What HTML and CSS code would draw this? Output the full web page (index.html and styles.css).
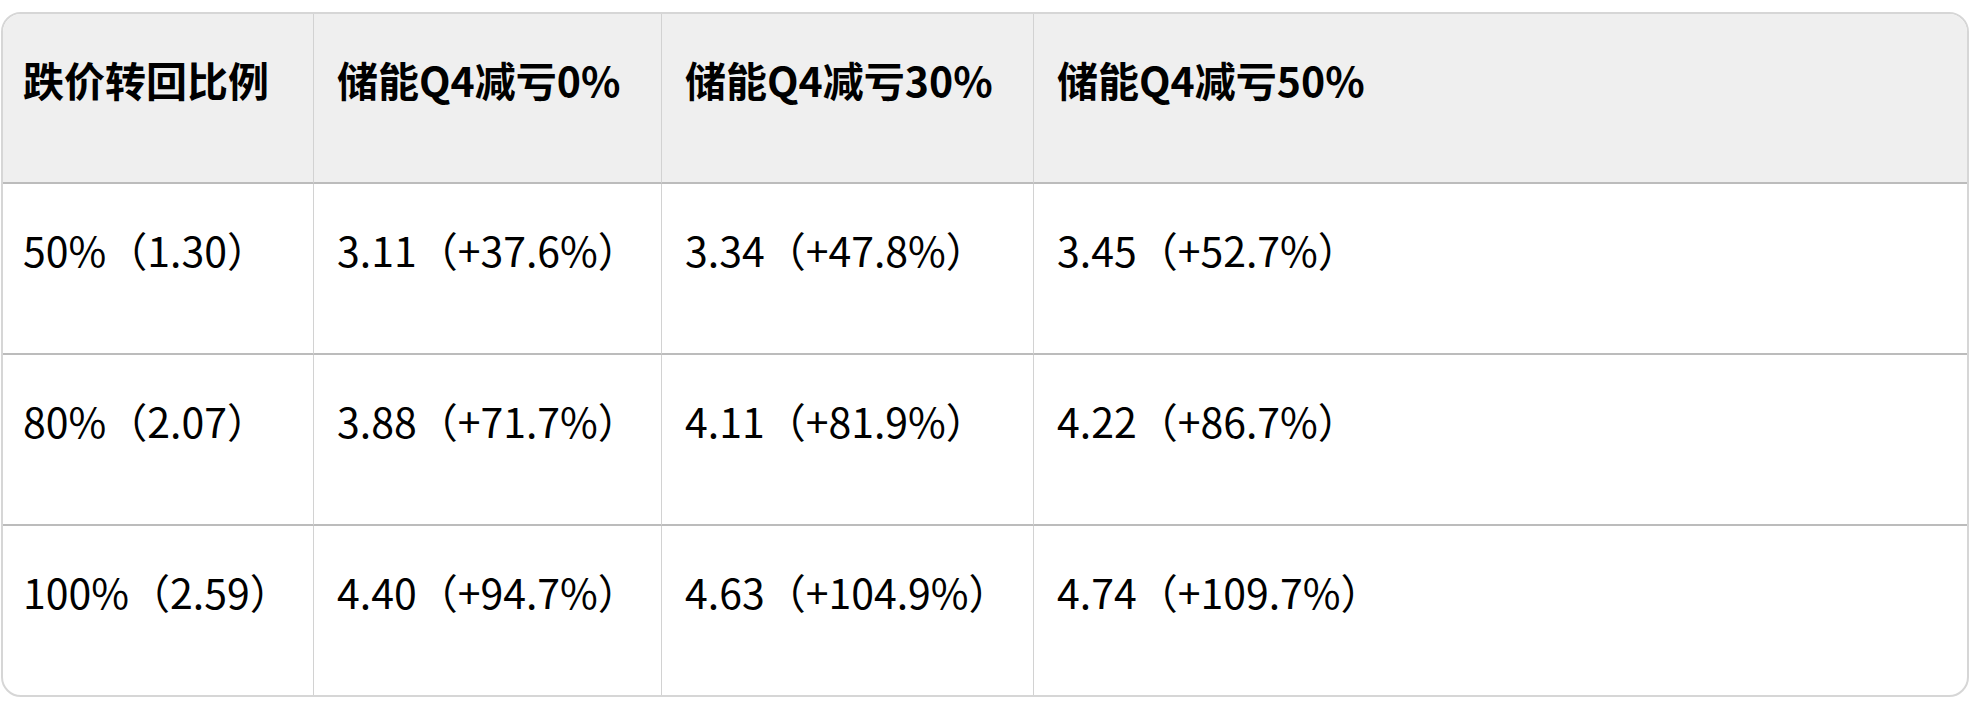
FILE: index.html
```html
<!DOCTYPE html>
<html lang="zh-CN">
<head>
<meta charset="utf-8">
<title>跌价转回比例</title>
<link rel="stylesheet" href="styles.css">
</head>
<body>
<div class="table">
  <div class="cell head first">跌价转回比例</div>
  <div class="cell head">储能Q4减亏0%</div>
  <div class="cell head">储能Q4减亏30%</div>
  <div class="cell head">储能Q4减亏50%</div>

  <div class="cell first">50%（1.30）</div>
  <div class="cell">3.11（+37.6%）</div>
  <div class="cell">3.34（+47.8%）</div>
  <div class="cell">3.45（+52.7%）</div>

  <div class="cell first">80%（2.07）</div>
  <div class="cell">3.88（+71.7%）</div>
  <div class="cell">4.11（+81.9%）</div>
  <div class="cell">4.22（+86.7%）</div>

  <div class="cell first last">100%（2.59）</div>
  <div class="cell last">4.40（+94.7%）</div>
  <div class="cell last">4.63（+104.9%）</div>
  <div class="cell last">4.74（+109.7%）</div>
</div>
</body>
</html>
```
FILE: styles.css
```css
html, body {
  margin: 0;
  padding: 0;
  background: #ffffff;
}

body {
  padding: 12px 16px 0 1px;
  font-family: "Noto Sans CJK SC", "Noto Sans", sans-serif;
  color: #000000;
}

.table {
  display: grid;
  grid-template-columns: 310px 348px 372px 1fr;
  grid-template-rows: 170px 171px 171px 169px;
  border: 2px solid #d6d6d6;
  border-radius: 20px;
  overflow: hidden;
  width: 1968px;
  box-sizing: border-box;
}

.cell {
  box-sizing: border-box;
  padding: 34px 22px 0 23px;
  font-size: 41px;
  line-height: 62px;
  white-space: nowrap;
  border-left: 1px solid #d2d2d2;
  border-bottom: 2px solid #bcbcbc;
}

.cell.first {
  border-left: none;
  padding-left: 20px;
}

.cell.last {
  border-bottom: none;
}

.cell.head {
  background: #efefef;
  font-weight: 700;
}
```
